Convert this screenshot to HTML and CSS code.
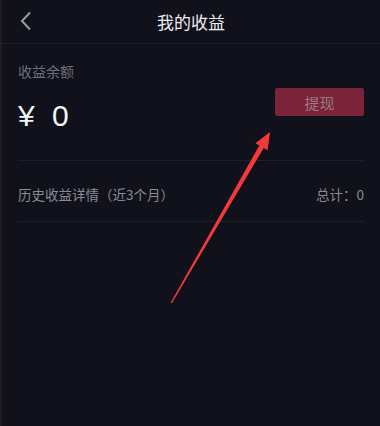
FILE: index.html
```html
<!DOCTYPE html>
<html lang="zh-CN">
<head>
<meta charset="utf-8">
<link rel="stylesheet" href="styles.css">
</head>
<body>
<div class="page">
  <header class="topbar">
    <svg class="back" width="12" height="20" viewBox="0 0 12 20"><path d="M10 1.5 L2 10 L10 18.5" fill="none" stroke="#9a9ba2" stroke-width="2"/></svg>
    <h1 class="title">我的收益</h1>
  </header>
  <main class="content">
    <section class="balance">
      <div class="balance-info">
        <div class="label">收益余额</div>
        <div class="amount">¥ 0</div>
      </div>
      <button class="withdraw">提现</button>
    </section>
    <section class="history">
      <span>历史收益详情（近3个月）</span>
      <span>总计：0</span>
    </section>
  </main>
  <svg class="arrow" width="380" height="426" viewBox="0 0 380 426"><polygon points="170.5,303 259.3,145.4 255.4,143.2 270,132 267.6,150.2 263.7,148 172,303" fill="#f23a3a"/></svg>
</div>
</body>
</html>
```
FILE: styles.css
```css
html, body {
  margin: 0;
  padding: 0;
  background: #10111b;
}
.page {
  position: relative;
  width: 378px;
  height: 426px;
  border-left: 2px solid #1d1d22;
  background: #10111b;
  font-family: "Liberation Sans", "Noto Sans CJK SC", sans-serif;
  overflow: hidden;
}
.topbar {
  position: relative;
  height: 43px;
  border-bottom: 1px solid #1e1f2a;
  display: flex;
  align-items: center;
  justify-content: center;
}
.back {
  position: absolute;
  left: 18px;
  top: 11px;
}
.title {
  margin: 0;
  font-size: 17px;
  font-weight: 400;
  color: #ededf0;
  font-family: "Noto Sans CJK SC", sans-serif;
}
.content {
  padding: 0 16px 0 16px;
}
.balance {
  display: flex;
  justify-content: space-between;
  align-items: flex-start;
  padding: 17px 0 26px;
  border-bottom: 1px solid #1e1f2a;
}
.label {
  font-size: 14px;
  line-height: 20px;
  color: #6f707a;
  font-family: "Noto Sans CJK SC", sans-serif;
}
.amount {
  margin-top: 17px;
  font-size: 30px;
  line-height: 36px;
  color: #f4f4f6;
  word-spacing: 9px;
}
.withdraw {
  margin-top: 27px;
  width: 89px;
  height: 28px;
  border: none;
  border-radius: 2px;
  background: #7b2338;
  color: #9a7a84;
  font-size: 15px;
  font-family: "Noto Sans CJK SC", sans-serif;
  padding: 0;
}
.history {
  display: flex;
  justify-content: space-between;
  align-items: center;
  height: 54px;
  padding-top: 6px;
  border-bottom: 1px solid #1e1f2a;
  font-size: 13.5px;
  color: #8a8b93;
  font-family: "Noto Sans CJK SC", sans-serif;
}
.arrow {
  position: absolute;
  left: -2px;
  top: 0;
}
```
